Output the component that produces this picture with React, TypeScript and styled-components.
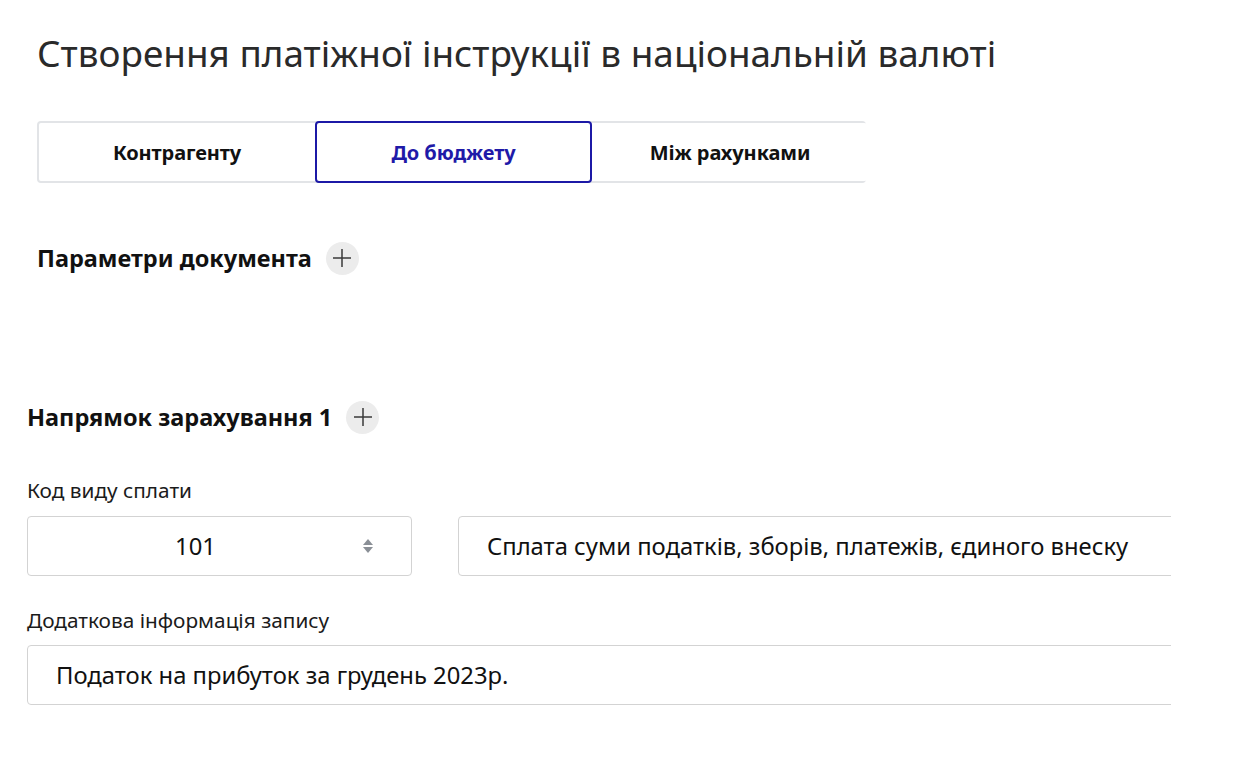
import React from 'react';
import styled, { createGlobalStyle } from 'styled-components';

const GlobalStyle = createGlobalStyle`
  * {
    margin: 0;
    padding: 0;
    box-sizing: border-box;
  }

  body {
    font-family: 'Noto Sans', 'Open Sans', sans-serif;
    background: #ffffff;
    color: #1b1b1b;
    overflow: hidden;
  }

  html, body, #root {
    height: 100%;
  }
`;

const Page = styled.div`
  width: 1171px;
  padding: 30px 0 0 27px;
  overflow: hidden;
`;

const Top = styled.div`
  padding-left: 10px;
`;

const Title = styled.h1`
  font-size: 36.9px;
  font-weight: 400;
  color: #2a2a2a;
  line-height: 46px;
  white-space: nowrap;
`;

const Tabs = styled.div`
  display: grid;
  grid-template-columns: 276px 277px 276px;
  width: 829px;
  height: 62px;
  margin-top: 45px;
  border: 2px solid #e2e4e7;
  border-radius: 4px;
`;

const Tab = styled.button<{ $active?: boolean }>`
  font-family: 'Noto Sans', sans-serif;
  font-size: 20px;
  font-weight: 700;
  letter-spacing: -0.1px;
  color: ${p => (p.$active ? '#1f1aa8' : '#111')};
  background: #fff;
  border: ${p => (p.$active ? '2px solid #1c19a6' : 'none')};
  border-radius: 4px;
  margin: ${p => (p.$active ? '-2px 0' : '0')};
  cursor: pointer;
`;

const SectionHead = styled.div<{ $top: number }>`
  display: flex;
  align-items: center;
  gap: 14px;
  margin-top: ${p => p.$top}px;
  height: 34px;
`;

const SectionTitle = styled.h2`
  font-size: 23.5px;
  font-weight: 700;
  color: #111;
  white-space: nowrap;
`;

const PlusButton = styled.button`
  width: 33px;
  height: 33px;
  border-radius: 50%;
  border: none;
  background: #ececec;
  display: flex;
  align-items: center;
  justify-content: center;
  cursor: pointer;
`;

const Label = styled.div<{ $top: number }>`
  font-size: 20.8px;
  color: #1b1b1b;
  margin-top: ${p => p.$top}px;
  line-height: 24px;
  white-space: nowrap;
`;

const Row = styled.div<{ $top: number; $single?: boolean }>`
  display: grid;
  grid-template-columns: ${p => (p.$single ? '1fr' : '385px 1fr')};
  gap: 46px;
  margin-top: ${p => p.$top}px;
`;

const Field = styled.div<{ $center?: boolean }>`
  position: relative;
  height: 60px;
  border: 1px solid #d3d3d3;
  border-radius: 4px;
  display: flex;
  align-items: center;
  justify-content: ${p => (p.$center ? 'center' : 'flex-start')};
  padding: ${p => (p.$center ? '0 48px 0 0' : '0 0 0 28px')};
  font-size: 23.8px;
  color: #111;
  white-space: nowrap;
`;

const Bleed = styled(Field)`
  margin-right: -20px;
`;

const Spinner = styled.span`
  position: absolute;
  right: 37px;
  top: 50%;
  transform: translateY(-50%);
  display: flex;
`;

const Plus = () => (
  <svg width="22" height="22" viewBox="0 0 22 22">
    <path d="M11 2v18M2 11h18" stroke="#3a3a3a" strokeWidth="1.5" />
  </svg>
);

export default function App() {
  return (
    <>
      <GlobalStyle />
      <Page>
        <Top>
          <Title>Створення платіжної інструкції в національній валюті</Title>
          <Tabs>
            <Tab>Контрагенту</Tab>
            <Tab $active>До бюджету</Tab>
            <Tab>Між рахунками</Tab>
          </Tabs>
          <SectionHead $top={58}>
            <SectionTitle>Параметри документа</SectionTitle>
            <PlusButton aria-label="Розгорнути"><Plus /></PlusButton>
          </SectionHead>
        </Top>

        <SectionHead $top={125}>
          <SectionTitle>Напрямок зарахування 1</SectionTitle>
          <PlusButton aria-label="Розгорнути"><Plus /></PlusButton>
        </SectionHead>

        <Label $top={44}>Код виду сплати</Label>
        <Row $top={14}>
          <Field $center>
            101
            <Spinner>
              <svg width="12" height="16" viewBox="0 0 12 16">
                <path d="M6 1l5 6H1z" fill="#8a8f96" />
                <path d="M6 15l5-6H1z" fill="#8a8f96" />
              </svg>
            </Spinner>
          </Field>
          <Bleed>Сплата суми податків, зборів, платежів, єдиного внеску</Bleed>
        </Row>

        <Label $top={32}>Додаткова інформація запису</Label>
        <Row $top={13} $single>
          <Bleed>Податок на прибуток за грудень 2023р.</Bleed>
        </Row>
      </Page>
    </>
  );
}
